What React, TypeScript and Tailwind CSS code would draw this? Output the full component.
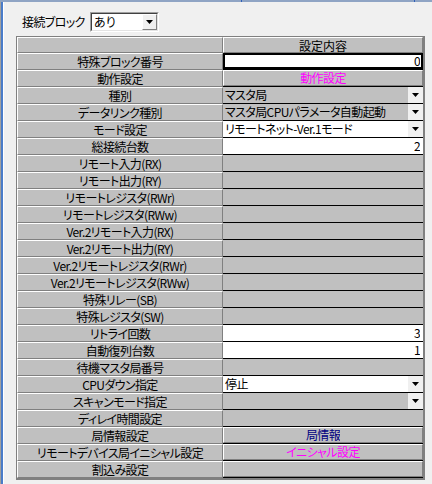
import React from "react";

type Kind = "gray" | "white" | "focus" | "button" | "dropdown";
type Row = {
  label: string;
  kind: Kind;
  text?: string;
  right?: boolean;
  color?: string;
  white?: boolean;
};

const rows: Row[] = [
  { label: "特殊ブロック番号", kind: "focus", text: "0", right: true },
  { label: "動作設定", kind: "button", text: "動作設定", color: "text-[#ff00ff]" },
  { label: "種別", kind: "dropdown", text: "マスタ局" },
  { label: "データリンク種別", kind: "dropdown", text: "マスタ局CPUパラメータ自動起動" },
  { label: "モード設定", kind: "dropdown", text: "リモートネット-Ver.1モード", white: true },
  { label: "総接続台数", kind: "white", text: "2", right: true },
  { label: "リモート入力(RX)", kind: "gray" },
  { label: "リモート出力(RY)", kind: "gray" },
  { label: "リモートレジスタ(RWr)", kind: "gray" },
  { label: "リモートレジスタ(RWw)", kind: "gray" },
  { label: "Ver.2リモート入力(RX)", kind: "gray" },
  { label: "Ver.2リモート出力(RY)", kind: "gray" },
  { label: "Ver.2リモートレジスタ(RWr)", kind: "gray" },
  { label: "Ver.2リモートレジスタ(RWw)", kind: "gray" },
  { label: "特殊リレー(SB)", kind: "gray" },
  { label: "特殊レジスタ(SW)", kind: "gray" },
  { label: "リトライ回数", kind: "white", text: "3", right: true },
  { label: "自動復列台数", kind: "white", text: "1", right: true },
  { label: "待機マスタ局番号", kind: "gray" },
  { label: "CPUダウン指定", kind: "dropdown", text: "停止", white: true },
  { label: "スキャンモード指定", kind: "dropdown", text: "" },
  { label: "ディレイ時間設定", kind: "gray" },
  { label: "局情報設定", kind: "button", text: "局情報", color: "text-[#000080]" },
  { label: "リモートデバイス局イニシャル設定", kind: "button", text: "イニシャル設定", color: "text-[#ff00ff]" },
  { label: "割込み設定", kind: "button", text: "" },
];

function Arrow() {
  return (
    <svg width="7" height="4" viewBox="0 0 7 4" className="block">
      <polygon points="0,0 7,0 3.5,4" fill="#000" />
    </svg>
  );
}

function DropBtn() {
  return (
    <div className="w-[15px] h-[16px] bg-[#f0f0f0] flex items-center justify-center shrink-0">
      <Arrow />
    </div>
  );
}

const txt = "text-[12px] leading-[16px] whitespace-nowrap overflow-hidden tracking-[-0.6px]";

function ValueCell({ r }: { r: Row }) {
  if (r.kind === "focus") {
    return (
      <div className="w-[200px] h-[17px] bg-white border-2 border-b-[3px] border-black flex items-center justify-end pr-[1px]">
        <span className={txt}>{r.text}</span>
      </div>
    );
  }
  if (r.kind === "button") {
    return (
      <div className="w-[200px] h-[17px] border-b border-black">
        <div className={`h-[16px] bg-[#c0c0c0] border-t border-l border-white border-r border-b border-r-[#808080] border-b-[#808080] flex items-center justify-center ${r.color ?? ""}`}>
          <span className={`${txt} leading-[14px]`}>{r.text}</span>
        </div>
      </div>
    );
  }
  if (r.kind === "dropdown") {
    return (
      <div className={`w-[200px] h-[17px] border-b border-black flex ${r.white ? "bg-white" : "bg-[#c0c0c0]"}`}>
        <div className={`flex-1 pl-[2px] ${txt}`}>{r.text}</div>
        <DropBtn />
      </div>
    );
  }
  return (
    <div
      className={`w-[200px] h-[17px] border-b border-black flex items-center ${
        r.kind === "white" ? "bg-white" : "bg-[#c0c0c0]"
      } ${r.right ? "justify-end pr-[3px]" : "pl-[2px]"}`}
    >
      <span className={txt}>{r.text ?? ""}</span>
    </div>
  );
}

function LabelCell({ text, h = "h-[17px]" }: { text: string; h?: string }) {
  return (
    <div
      className={`w-[206px] ${h} bg-[#c0c0c0] border-t border-l border-white border-b border-r border-b-[#808080] border-r-[#808080] flex items-center justify-center text-[12px] leading-[15px] whitespace-nowrap tracking-[-0.6px]`}
    >
      {text}
    </div>
  );
}

export default function App() {
  return (
    <div className="w-[432px] h-[484px] bg-[#f0f0f0] overflow-hidden flex flex-col text-black font-normal font-['Noto_Sans_CJK_JP',sans-serif] [font-feature-settings:'palt']">
      <div className="h-[2px] bg-[#8fa4c4] shrink-0 relative">
        <div className="absolute left-[241px] top-0 w-px h-[2px] bg-[#2f5fb8]" />
        <div className="absolute left-[414px] top-0 w-px h-[2px] bg-[#2f5fb8]" />
      </div>
      <div className="flex flex-1">
        <div className="w-px bg-[#a0a0a0]" />
        <div className="w-[2px] bg-[#4a7cc9]" />
        <div className="w-px bg-white" />
        <div className="flex-1 flex flex-col">
          <div className="h-[34px] flex items-start pt-[10px] pl-[18px]">
            <div className="w-[68px] h-[20px] flex items-center text-[12px] leading-[16px] whitespace-nowrap tracking-[-0.6px]">
              接続ブロック
            </div>
            <div className="w-[69px] h-[20px] border border-t-[#a0a0a0] border-l-[#a0a0a0] border-r-white border-b-white">
              <div className="h-full border border-t-[#404040] border-l-[#404040] border-r-[#e3e3e3] border-b-[#e3e3e3] bg-white flex">
                <div className="flex-1 pl-[2px] text-[12px] leading-[16px]">あり</div>
                <div className="w-[15px] h-full bg-[#f0f0f0] border border-t-white border-l-white border-r-[#808080] border-b-[#808080] flex items-center justify-center">
                  <Arrow />
                </div>
              </div>
            </div>
          </div>
          <div className="ml-[12px] w-[409px] border-l border-t border-r-2 border-b-2 border-[#808080] flex flex-col self-start">
            <div className="flex">
              <LabelCell text="" h="h-[16px]" />
              <div className="w-[200px] h-[16px] bg-[#c0c0c0] border-t border-l border-white border-b border-r border-b-[#808080] border-r-[#808080] flex items-center justify-center text-[12px] leading-[15px]">
                設定内容
              </div>
            </div>
            {rows.map((r, i) => (
              <div className="flex" key={i}>
                <LabelCell text={r.label} />
                <ValueCell r={r} />
              </div>
            ))}
          </div>
        </div>
      </div>
    </div>
  );
}
